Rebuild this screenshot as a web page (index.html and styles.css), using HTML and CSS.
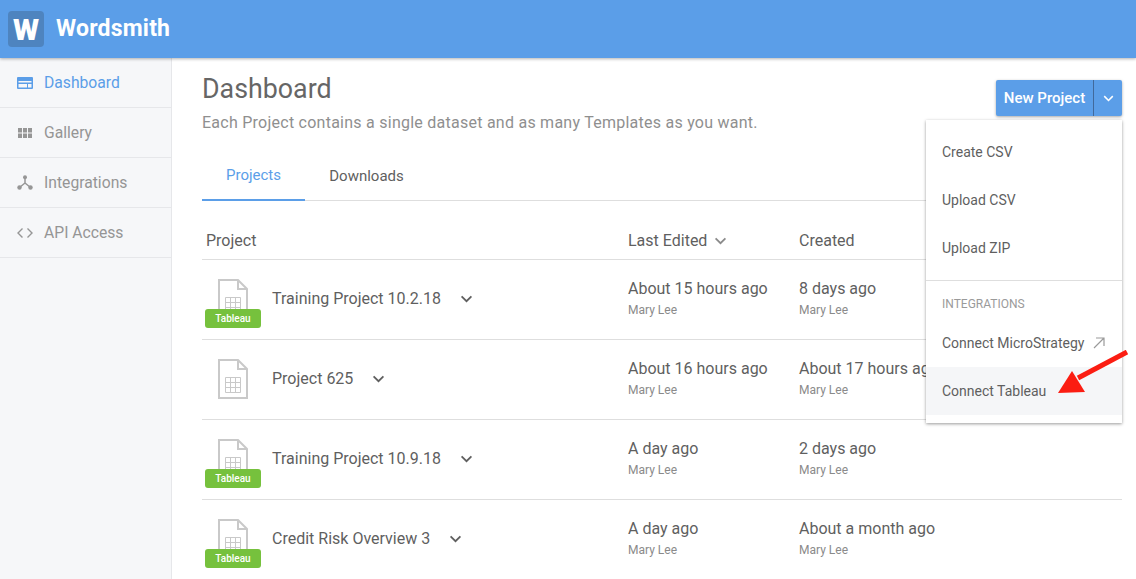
FILE: index.html
```html
<!DOCTYPE html>
<html lang="en">
<head>
<meta charset="utf-8">
<title>Wordsmith</title>
<link rel="stylesheet" href="styles.css">
</head>
<body>
<svg class="sprite" width="0" height="0" aria-hidden="true">
  <defs>
    <symbol id="file" viewBox="0 0 30 40">
      <path d="M1 1H20L29 10V39H1Z M20 1V10H29" fill="#fff" stroke="#c9c9c9" stroke-width="2"/>
      <path d="M7.500 18.500H22.500V33.500H7.500Z M7.500 23.500H22.500 M7.500 28.500H22.500 M12.500 18.500V33.500 M17.500 18.500V33.500" fill="none" stroke="#c9c9c9" stroke-width="1"/>
    </symbol>
    <symbol id="chev" viewBox="0 0 14 9">
      <path d="M1.500 1.500L7 7L12.500 1.500" fill="none" stroke="currentColor" stroke-width="2"/>
    </symbol>
  </defs>
</svg>
<header class="topbar">
  <div class="logo">W</div>
  <div class="brand">Wordsmith</div>
</header>
<div class="shell">
  <nav class="sidebar">
    <a class="nav-item active">
      <svg class="nav-icon" viewBox="0 0 16 12"><path d="M1 0H15A1 1 0 0 1 16 1V11A1 1 0 0 1 15 12H1A1 1 0 0 1 0 11V1A1 1 0 0 1 1 0ZM1.500 4V10.500H10V7H1.500V5.500H14.500V4ZM11 7V10.500H14.500V7Z" fill="#5b9ee8" fill-rule="evenodd"/></svg>
      <span>Dashboard</span>
    </a>
    <a class="nav-item">
      <svg class="nav-icon" viewBox="0 0 16 12"><path d="M1 1H5V5.500H1ZM6 1H10V5.500H6ZM11 1H15V5.500H11ZM1 6.500H5V11H1ZM6 6.500H10V11H6ZM11 6.500H15V11H11Z" fill="#969696"/></svg>
      <span>Gallery</span>
    </a>
    <a class="nav-item">
      <svg class="nav-icon tall" viewBox="0 0 16 15"><path d="M8 2.500V8L2.500 12.500M8 8L13.500 12.500" fill="none" stroke="#969696" stroke-width="1.500"/><circle cx="8" cy="2.200" r="2" fill="#969696"/><circle cx="2.500" cy="12.500" r="2.200" fill="#969696"/><circle cx="13.500" cy="12.500" r="2.200" fill="#969696"/></svg>
      <span>Integrations</span>
    </a>
    <a class="nav-item">
      <svg class="nav-icon" viewBox="0 0 16 12"><path d="M5.500 1.500L1 6L5.500 10.500M10.500 1.500L15 6L10.500 10.500" fill="none" stroke="#969696" stroke-width="1.400"/></svg>
      <span>API Access</span>
    </a>
  </nav>
  <main class="content">
    <div class="page-head">
      <div>
        <h1 class="title">Dashboard</h1>
        <p class="subtitle">Each Project contains a single dataset and as many Templates as you want.</p>
      </div>
      <div class="split-btn">
        <span class="split-main">New Project</span>
        <span class="split-caret"><svg class="caret-icon"><use href="#chev"/></svg></span>
      </div>
    </div>
    <div class="tabs">
      <span class="tab active">Projects</span>
      <span class="tab">Downloads</span>
    </div>
    <div class="row head">
      <div class="col-name">Project</div>
      <div class="col-edited">Last Edited <svg class="sort-icon"><use href="#chev"/></svg></div>
      <div class="col-created">Created</div>
    </div>
    <div class="row">
      <div class="col-name">
        <div class="file"><svg class="file-icon"><use href="#file"/></svg><span class="badge">Tableau</span></div>
        <span class="pname">Training Project 10.2.18</span><svg class="chev"><use href="#chev"/></svg>
      </div>
      <div class="col-edited"><div class="when">About 15 hours ago</div><div class="who">Mary Lee</div></div>
      <div class="col-created"><div class="when">8 days ago</div><div class="who">Mary Lee</div></div>
    </div>
    <div class="row">
      <div class="col-name">
        <div class="file"><svg class="file-icon"><use href="#file"/></svg></div>
        <span class="pname">Project 625</span><svg class="chev"><use href="#chev"/></svg>
      </div>
      <div class="col-edited"><div class="when">About 16 hours ago</div><div class="who">Mary Lee</div></div>
      <div class="col-created"><div class="when">About 17 hours ago</div><div class="who">Mary Lee</div></div>
    </div>
    <div class="row">
      <div class="col-name">
        <div class="file"><svg class="file-icon"><use href="#file"/></svg><span class="badge">Tableau</span></div>
        <span class="pname">Training Project 10.9.18</span><svg class="chev"><use href="#chev"/></svg>
      </div>
      <div class="col-edited"><div class="when">A day ago</div><div class="who">Mary Lee</div></div>
      <div class="col-created"><div class="when">2 days ago</div><div class="who">Mary Lee</div></div>
    </div>
    <div class="row">
      <div class="col-name">
        <div class="file"><svg class="file-icon"><use href="#file"/></svg><span class="badge">Tableau</span></div>
        <span class="pname">Credit Risk Overview 3</span><svg class="chev"><use href="#chev"/></svg>
      </div>
      <div class="col-edited"><div class="when">A day ago</div><div class="who">Mary Lee</div></div>
      <div class="col-created"><div class="when">About a month ago</div><div class="who">Mary Lee</div></div>
    </div>
  </main>
</div>
<div class="menu">
  <div class="menu-group">
    <div class="menu-item">Create CSV</div>
    <div class="menu-item">Upload CSV</div>
    <div class="menu-item">Upload ZIP</div>
  </div>
  <div class="menu-group last">
    <div class="menu-label">INTEGRATIONS</div>
    <div class="menu-item">Connect MicroStrategy<svg class="ext" viewBox="0 0 12 12"><path d="M1 11L11 1M3 1H11V9" fill="none" stroke="#9a9a9a" stroke-width="1.200"/></svg></div>
    <div class="menu-item hover">Connect Tableau</div>
  </div>
</div>
<svg class="arrow" viewBox="0 0 80 50"><path d="M69 2L20 28" stroke="#fb1d12" stroke-width="5" fill="none"/><path d="M0 43L14 21L27 42Z" fill="#fb1d12"/></svg>
</body>
</html>
```
FILE: styles.css
```css
* { box-sizing: border-box; }
html, body { margin: 0; height: 579px; overflow: hidden; }
body { font-family: Roboto, "Liberation Sans", sans-serif; color: #5f5f5f; background: #fff; position: relative; -webkit-font-smoothing: antialiased; }
.sprite { position: absolute; }

.topbar { height: 58px; background: #5b9ee8; display: flex; align-items: center; padding-left: 8px; box-shadow: 0 1px 3px rgba(0,0,0,.3); position: relative; z-index: 2; }
.logo { width: 36px; height: 36px; border-radius: 4px; background: #4e84bf; color: #fff; font-weight: 900; font-size: 30px; display: flex; align-items: center; justify-content: center; }
.brand { margin-left: 12px; padding-bottom: 2px; color: #fff; font-weight: 700; font-size: 23px; letter-spacing: .2px; }

.shell { display: flex; height: 521px; }
.sidebar { width: 172px; flex: none; background: #f6f7f9; border-right: 1px solid #e6e7ea; }
.nav-item { height: 50px; display: flex; align-items: center; padding-left: 17px; font-size: 15.700px; color: #959595; border-bottom: 1px solid #e6e7ea; }
.nav-item.active { color: #5b9ee8; }
.nav-icon { width: 16px; height: 12px; margin-right: 11px; flex: none; }
.nav-icon.tall { height: 15px; }

.content { flex: 1; padding: 0 14px 0 30px; min-width: 0; }
.page-head { display: flex; justify-content: space-between; align-items: flex-start; height: 92px; padding-top: 15px; }
.title { margin: 0; font-size: 26.800px; font-weight: 400; line-height: 32px; color: #666; }
.subtitle { margin: 7px 0 0; font-size: 16px; line-height: 22px; letter-spacing: .25px; color: #8f8f8f; }
.split-btn { display: flex; height: 36px; margin-top: 7px; border-radius: 2px; background: #5b9ee8; color: #fff; font-size: 15px; font-weight: 500; box-shadow: 0 1px 3px rgba(0,0,0,.35); }
.split-main { width: 98px; display: flex; align-items: center; justify-content: center; border-right: 1px solid #41699b; }
.split-caret { width: 28px; display: flex; align-items: center; justify-content: center; }
.caret-icon { width: 11px; height: 7px; }

.tabs { display: flex; height: 51px; border-bottom: 1px solid #dedede; font-size: 15px; }
.tab { height: 51px; display: flex; align-items: center; justify-content: center; }
.tab:first-child { width: 103px; }
.tab:last-child { width: 123px; }
.tab.active { color: #5b9ee8; border-bottom: 2px solid #5b9ee8; }

.row { display: flex; height: 80px; border-bottom: 1px solid #dedede; align-items: center; padding-left: 4px; }
.row.head { height: 59px; padding-top: 21px; font-size: 16px; color: #5f5f5f; }
.col-name { width: 422px; flex: none; display: flex; align-items: center; }
.col-edited { width: 171px; flex: none; display: flex; flex-direction: column; align-items: flex-start; }
.head .col-edited { flex-direction: row; align-items: center; }
.col-created { flex: 1; }
.sort-icon { width: 13px; height: 8px; margin-left: 7px; color: #8a8a8a; }
.file { width: 56px; height: 60px; position: relative; flex: none; margin-left: -1px; margin-right: 11px; }
.file-icon { position: absolute; left: 13px; top: 9px; width: 30px; height: 40px; }
.badge { position: absolute; left: 0; top: 39px; width: 56px; height: 19px; background: #76c13d; border-radius: 3px; color: #fff; font-size: 10px; font-weight: 500; display: flex; align-items: center; justify-content: center; }
.pname { font-size: 16px; color: #5f5f5f; margin-bottom: 2px; }
.chev { width: 13px; height: 8px; margin-left: 19px; margin-bottom: 1px; color: #5f5f5f; }
.when { font-size: 16px; line-height: 20px; color: #5f5f5f; margin-top: -1px; }
.who { font-size: 12px; line-height: 16px; color: #8a8a8a; margin-top: 3px; margin-bottom: 2px; }

.menu { position: absolute; left: 926px; top: 120px; width: 196px; height: 303px; background: #fff; box-shadow: 0 1px 3px rgba(0,0,0,.4); z-index: 5; font-size: 14px; padding-top: 8px; }
.menu-group { border-bottom: 1px solid #dedede; padding-bottom: 8px; }
.menu-group.last { border-bottom: 0; padding-bottom: 8px; }
.menu-item { height: 48px; display: flex; align-items: center; padding-left: 16px; color: #5f5f5f; }
.menu-item.hover { background: #f5f6f8; }
.menu-label { height: 38px; padding: 16px 16px 0; font-size: 12px; color: #9a9a9a; }
.ext { width: 12px; height: 12px; margin-left: 9px; }
.arrow { position: absolute; left: 1058px; top: 350px; width: 80px; height: 50px; z-index: 6; }
```
